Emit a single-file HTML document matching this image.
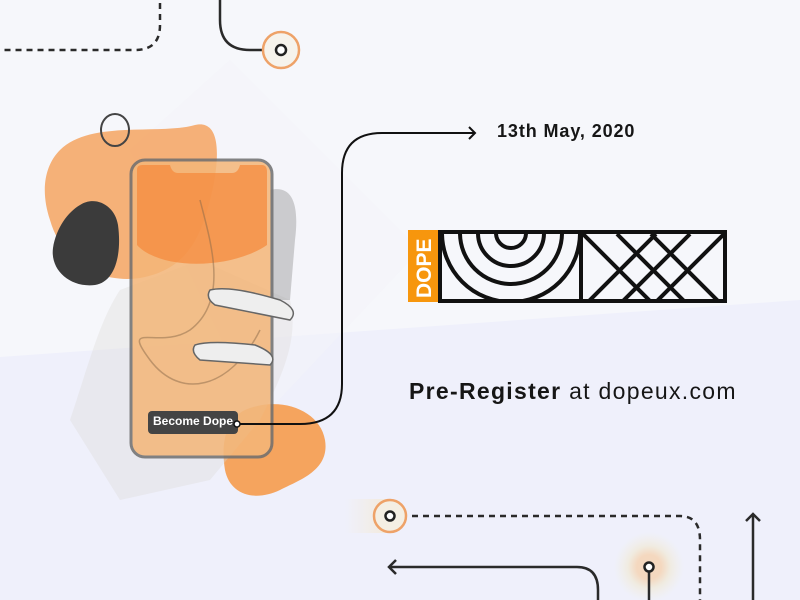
<!DOCTYPE html>
<html><head><meta charset="utf-8"><style>
html,body{margin:0;padding:0}
body{width:800px;height:600px;overflow:hidden;background:#f6f7fb;font-family:"Liberation Sans",sans-serif;position:relative}
.t{position:absolute;color:#161616;white-space:nowrap}
</style></head><body>
<svg width="800" height="600" style="position:absolute;left:0;top:0">
<defs>
<linearGradient id="fade" x1="0" x2="1"><stop offset="0" stop-color="#f3ece0" stop-opacity="0"/><stop offset="1" stop-color="#f3ead9"/></linearGradient>
<radialGradient id="glow"><stop offset="0.35" stop-color="#f4d8bf"/><stop offset="0.6" stop-color="#f0ebe0"/><stop offset="1" stop-color="#f0efe8" stop-opacity="0"/></radialGradient>
</defs>
<polygon points="0,357 800,300 800,600 0,600" fill="#eff0fb"/>
<polygon points="130,150 230,60 420,250 260,420" fill="#f3f4f9" opacity="0.5"/>
<path d="M160,3 V25 Q160,50 135,50 H0" fill="none" stroke="#2a2a2a" stroke-width="2.5" stroke-dasharray="6,5"/>
<path d="M220,0 V20 Q220,50 250,50 H282" fill="none" stroke="#2a2a2a" stroke-width="2.5"/>
<circle cx="281" cy="50" r="18" fill="#f6f3ec" stroke="#eea268" stroke-width="2.5"/>
<circle cx="281" cy="50" r="5" fill="#fff" stroke="#222" stroke-width="2.5"/>
<path d="M60,150 C90,120 160,135 195,125 C225,118 218,170 210,200 C200,240 185,270 140,278 C100,284 62,262 50,220 C40,190 45,165 60,150Z" fill="#f5a869" opacity="0.9"/>
<ellipse cx="115" cy="130" rx="14" ry="16" fill="none" stroke="#444" stroke-width="2"/>
<path d="M80,205 C95,195 115,205 118,225 C122,255 115,282 95,285 C70,288 50,270 53,248 C56,228 68,212 80,205Z" fill="#3b3b3b"/>
<path d="M245,410 C280,395 320,410 325,440 C330,470 300,480 280,490 C255,502 230,495 225,470 C220,440 228,418 245,410Z" fill="#f59b4d" opacity="0.9"/>
<path d="M70,420 C90,360 100,320 120,290 L200,260 L290,300 C300,340 280,380 260,420 L210,480 L120,500 Z" fill="#dcdad7" opacity="0.35"/>
<path d="M270,190 C290,185 300,200 295,240 L290,300 L270,300 Z" fill="#9a9a9a" opacity="0.45"/>
<rect x="131" y="160" width="141" height="297" rx="14" fill="#f4b678" opacity="0.85" stroke="#6f6f6f" stroke-width="3"/>
<path d="M137,170 Q137,165 142,165 H170 Q172,173 178,173 H232 Q238,173 240,165 H262 Q267,165 267,172 V245 C230,270 160,270 137,245Z" fill="#f68b3d" opacity="0.75"/>
<path d="M200,200 C210,240 230,300 190,330 C160,350 120,320 150,360 C180,400 230,390 260,330" fill="none" stroke="#8a6a4a" stroke-width="1.5" opacity="0.5"/>
<path d="M210,290 Q230,285 280,300 Q300,310 290,320 L215,305 Q205,298 210,290Z" fill="#eeeeee" stroke="#666" stroke-width="1.5"/>
<path d="M195,345 Q210,340 255,345 Q280,355 270,365 L200,360 Q190,352 195,345Z" fill="#eeeeee" stroke="#666" stroke-width="1.5"/>
<rect x="148" y="411" width="90" height="23" rx="4" fill="#444"/>
<path d="M237,424 H300 Q342,424 342,384 V173 Q342,133 382,133 H475" fill="none" stroke="#111" stroke-width="2"/>
<path d="M469,127 L475,133 L469,139" fill="none" stroke="#111" stroke-width="2"/>
<circle cx="237" cy="424" r="3" fill="#fff" stroke="#111" stroke-width="1.5"/>
<rect x="408" y="230" width="30" height="72" fill="#f7960d"/>
<text x="0" y="0" transform="translate(431,298) rotate(-90)" font-family="Liberation Sans" font-weight="bold" font-size="21" fill="#fff">DOPE</text>
<rect x="440" y="232" width="285" height="69" fill="none" stroke="#111" stroke-width="4"/>
<line x1="581" y1="232" x2="581" y2="301" stroke="#111" stroke-width="4"/>
<clipPath id="c1"><rect x="442" y="234" width="137" height="65"/></clipPath>
<g clip-path="url(#c1)" fill="none" stroke="#111" stroke-width="4">
<circle cx="511" cy="233" r="15"/><circle cx="511" cy="233" r="33"/><circle cx="511" cy="233" r="51"/><circle cx="511" cy="233" r="69"/>
</g>
<clipPath id="c2"><rect x="583" y="234" width="140" height="65"/></clipPath>
<g clip-path="url(#c2)" stroke="#111" stroke-width="4">
<line x1="583" y1="234" x2="650" y2="301"/><line x1="617" y1="234" x2="684" y2="301"/><line x1="651" y1="234" x2="718" y2="301"/>
<line x1="724" y1="234" x2="657" y2="301"/><line x1="690" y1="234" x2="623" y2="301"/><line x1="656" y1="234" x2="589" y2="301"/>
</g>
<rect x="345" y="499" width="45" height="34" fill="url(#fade)"/>
<path d="M390,516 H680 Q700,516 700,540 V600" fill="none" stroke="#2a2a2a" stroke-width="2.5" stroke-dasharray="6,5"/>
<circle cx="390" cy="516" r="16" fill="#f4efe4" stroke="#eea268" stroke-width="2.5"/>
<circle cx="390" cy="516" r="4.5" fill="#fff" stroke="#222" stroke-width="2.5"/>
<path d="M389,567 H577 Q598,567 598,590 V600" fill="none" stroke="#2a2a2a" stroke-width="2.5"/>
<path d="M396,560 L389,567 L396,574" fill="none" stroke="#2a2a2a" stroke-width="2.5"/>
<circle cx="649" cy="567" r="35" fill="url(#glow)"/>
<line x1="649" y1="571" x2="649" y2="600" stroke="#2a2a2a" stroke-width="2.5"/>
<circle cx="649" cy="567" r="4.5" fill="#fff" stroke="#222" stroke-width="2.5"/>
<line x1="753" y1="514" x2="753" y2="600" stroke="#2a2a2a" stroke-width="2.5"/>
<path d="M746,521 L753,514 L760,521" fill="none" stroke="#2a2a2a" stroke-width="2.5"/>
</svg>
<div class="t" style="left:153px;top:414px;font-size:12px;font-weight:bold;color:#fff">Become Dope</div>
<div class="t" style="left:497px;top:121px;font-size:18px;font-weight:bold;letter-spacing:0.9px">13th May, 2020</div>
<div class="t" style="left:409px;top:378px;font-size:23px;letter-spacing:1.3px"><b>Pre-Register</b> at dopeux.com</div>
</body></html>
